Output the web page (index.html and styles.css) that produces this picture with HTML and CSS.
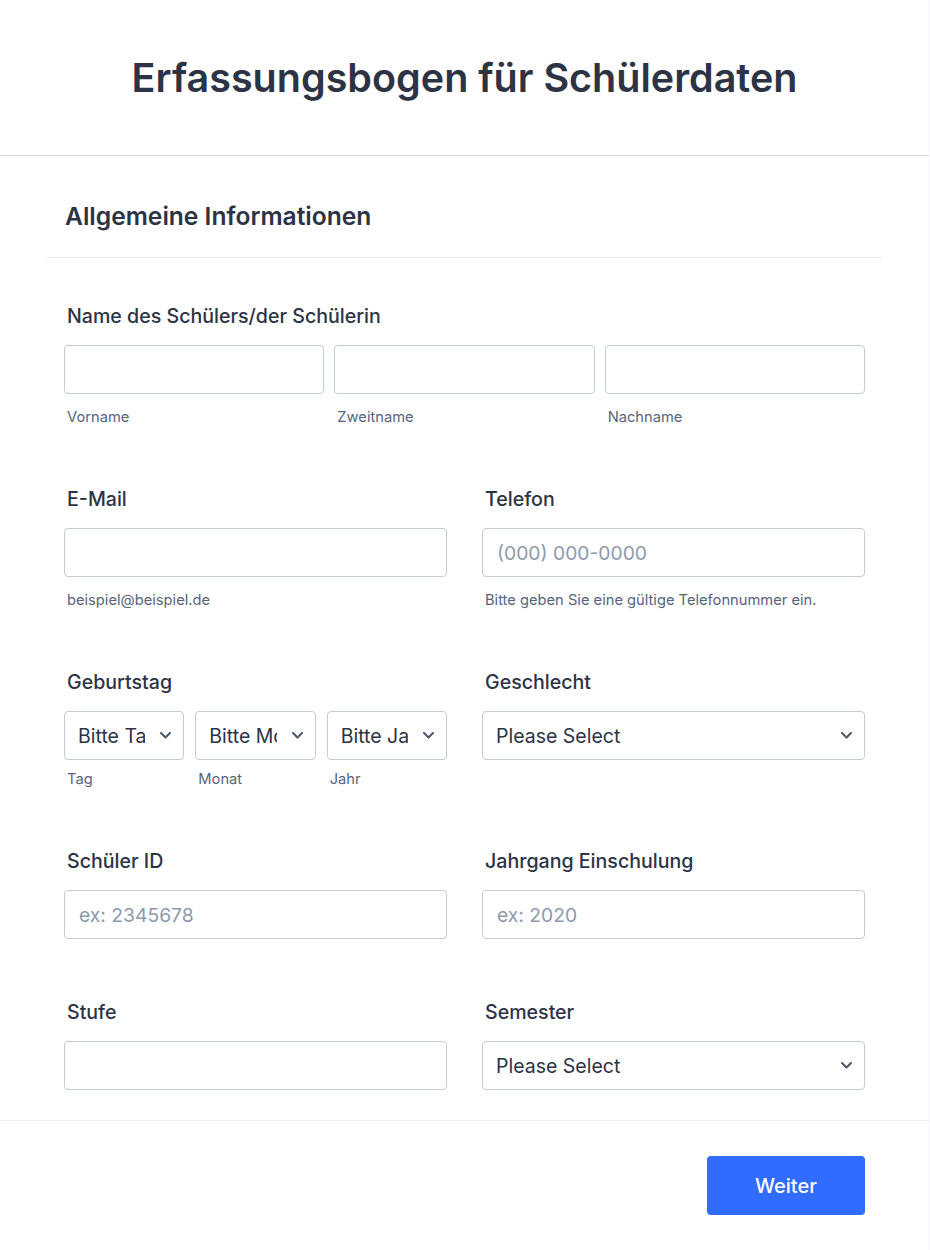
FILE: index.html
```html
<!DOCTYPE html>
<html lang="de">
<head>
<meta charset="utf-8">
<title>Erfassungsbogen für Schülerdaten</title>
<link rel="stylesheet" href="styles.css">
</head>
<body>
<div class="page">
  <header class="form-header">
    <h1 class="form-title">Erfassungsbogen für Schülerdaten</h1>
  </header>

  <section class="section">
    <div class="section-head">
      <h2 class="section-title">Allgemeine Informationen</h2>
    </div>

    <div class="fields">
      <div class="row">
        <div class="field">
          <label class="label">Name des Schülers/der Schülerin</label>
          <div class="triple name-triple">
            <div class="sub-field">
              <input class="input" type="text">
              <span class="sublabel">Vorname</span>
            </div>
            <div class="sub-field">
              <input class="input" type="text">
              <span class="sublabel">Zweitname</span>
            </div>
            <div class="sub-field">
              <input class="input" type="text">
              <span class="sublabel">Nachname</span>
            </div>
          </div>
        </div>
      </div>

      <div class="row two-col">
        <div class="field">
          <label class="label">E-Mail</label>
          <input class="input" type="email">
          <span class="sublabel">beispiel@beispiel.de</span>
        </div>
        <div class="field">
          <label class="label">Telefon</label>
          <input class="input" type="tel" placeholder="(000) 000-0000">
          <span class="sublabel">Bitte geben Sie eine gültige Telefonnummer ein.</span>
        </div>
      </div>

      <div class="row two-col">
        <div class="field">
          <label class="label">Geburtstag</label>
          <div class="triple date-triple">
            <div class="sub-field">
              <div class="select date-select">
                <span class="select-text">Bitte Tag wählen</span>
                <svg class="chevron" width="11" height="7" viewBox="0 0 11 7"><polyline points="1,1 5.5,5.5 10,1" fill="none" stroke="currentColor" stroke-width="2" stroke-linecap="round" stroke-linejoin="round"/></svg>
              </div>
              <span class="sublabel date-sub">Tag</span>
            </div>
            <div class="sub-field">
              <div class="select date-select">
                <span class="select-text">Bitte Monat wählen</span>
                <svg class="chevron" width="11" height="7" viewBox="0 0 11 7"><polyline points="1,1 5.5,5.5 10,1" fill="none" stroke="currentColor" stroke-width="2" stroke-linecap="round" stroke-linejoin="round"/></svg>
              </div>
              <span class="sublabel date-sub">Monat</span>
            </div>
            <div class="sub-field">
              <div class="select date-select">
                <span class="select-text">Bitte Jahr wählen</span>
                <svg class="chevron" width="11" height="7" viewBox="0 0 11 7"><polyline points="1,1 5.5,5.5 10,1" fill="none" stroke="currentColor" stroke-width="2" stroke-linecap="round" stroke-linejoin="round"/></svg>
              </div>
              <span class="sublabel date-sub">Jahr</span>
            </div>
          </div>
        </div>
        <div class="field">
          <label class="label">Geschlecht</label>
          <div class="select">
            <span class="select-text">Please Select</span>
            <svg class="chevron" width="11" height="7" viewBox="0 0 11 7"><polyline points="1,1 5.5,5.5 10,1" fill="none" stroke="currentColor" stroke-width="2" stroke-linecap="round" stroke-linejoin="round"/></svg>
          </div>
        </div>
      </div>

      <div class="row two-col">
        <div class="field">
          <label class="label">Schüler ID</label>
          <input class="input" type="text" placeholder="ex: 2345678">
        </div>
        <div class="field">
          <label class="label">Jahrgang Einschulung</label>
          <input class="input" type="text" placeholder="ex: 2020">
        </div>
      </div>

      <div class="row two-col last-row">
        <div class="field">
          <label class="label">Stufe</label>
          <input class="input" type="text">
        </div>
        <div class="field">
          <label class="label">Semester</label>
          <div class="select">
            <span class="select-text">Please Select</span>
            <svg class="chevron" width="11" height="7" viewBox="0 0 11 7"><polyline points="1,1 5.5,5.5 10,1" fill="none" stroke="currentColor" stroke-width="2" stroke-linecap="round" stroke-linejoin="round"/></svg>
          </div>
        </div>
      </div>
    </div>
  </section>

  <footer class="form-footer">
    <button class="btn-next" type="button">Weiter</button>
  </footer>
</div>
</body>
</html>
```

FILE: styles.css
```css
* {
  box-sizing: border-box;
}

html, body {
  margin: 0;
  padding: 0;
  background: #ffffff;
}

body {
  font-family: Inter, "Noto Sans", "Liberation Sans", sans-serif;
  color: #2c3345;
}

.page {
  width: 930px;
  height: 1250px;
  border-right: 1px solid #f6f7fa;
  display: flex;
  flex-direction: column;
}

.form-header {
  height: 156px;
  border-bottom: 1px solid #d9dbe6;
  display: flex;
  align-items: center;
  justify-content: center;
}

.form-title {
  margin: 0;
  font-size: 39.5px;
  line-height: 48px;
  font-weight: 600;
  color: #2c3345;
}

.section {
  padding: 0 47px;
}

.section-head {
  padding: 45px 0 26px 18px;
  border-bottom: 1px solid #eaebf2;
}

.section-title {
  margin: 0;
  font-size: 24.6px;
  line-height: 30px;
  font-weight: 600;
  color: #2c3345;
}

.fields {
  padding: 47px 17px 30px 17px;
}

.row {
  margin-bottom: 62px;
}

.row.last-row {
  margin-bottom: 0;
}

.two-col {
  display: grid;
  grid-template-columns: 1fr 1fr;
  column-gap: 35px;
}

.field {
  display: flex;
  flex-direction: column;
  min-width: 0;
}

.label {
  display: block;
  font-size: 19.6px;
  line-height: 22px;
  font-weight: 500;
  color: #2c3345;
  margin-bottom: 18px;
  padding-left: 3px;
  white-space: nowrap;
}

.triple {
  display: grid;
  grid-template-columns: 1fr 1fr 1fr;
}

.name-triple {
  column-gap: 10px;
}

.date-triple {
  column-gap: 11px;
}

.sub-field {
  display: flex;
  flex-direction: column;
  min-width: 0;
}

.input {
  display: block;
  width: 100%;
  height: 49px;
  margin: 0;
  padding: 0 14px;
  border: 1px solid #c3cad8;
  border-radius: 4px;
  background: #ffffff;
  font-family: Inter, "Noto Sans", "Liberation Sans", sans-serif;
  font-size: 19.3px;
  color: #2c3345;
  outline: none;
}

.input::placeholder {
  color: #8f99ad;
  opacity: 1;
}

.sublabel {
  display: block;
  margin-top: 15px;
  font-size: 14.7px;
  line-height: 17px;
  color: #57647e;
  padding-left: 3px;
  white-space: nowrap;
}

.sublabel.date-sub {
  margin-top: 11px;
}

.select {
  display: flex;
  align-items: center;
  height: 49px;
  padding: 0 12px 0 13px;
  border: 1px solid #c3cad8;
  border-radius: 4px;
  background: #ffffff;
}

.select-text {
  flex: 1;
  min-width: 0;
  overflow: hidden;
  white-space: nowrap;
  font-size: 19.5px;
  line-height: 24px;
  color: #2c3345;
}

.chevron {
  flex: none;
  margin-left: 12px;
  color: #4d576b;
}

.date-select .chevron {
  margin-left: 15px;
}

.form-footer {
  border-top: 1px solid #eceef5;
  padding: 35px 64px 35px 0;
  display: flex;
  justify-content: flex-end;
}

.btn-next {
  width: 158px;
  height: 59px;
  border: none;
  border-radius: 4px;
  background: #306cff;
  color: #ffffff;
  font-family: Inter, "Noto Sans", "Liberation Sans", sans-serif;
  font-size: 20px;
  font-weight: 500;
  cursor: pointer;
}
```
